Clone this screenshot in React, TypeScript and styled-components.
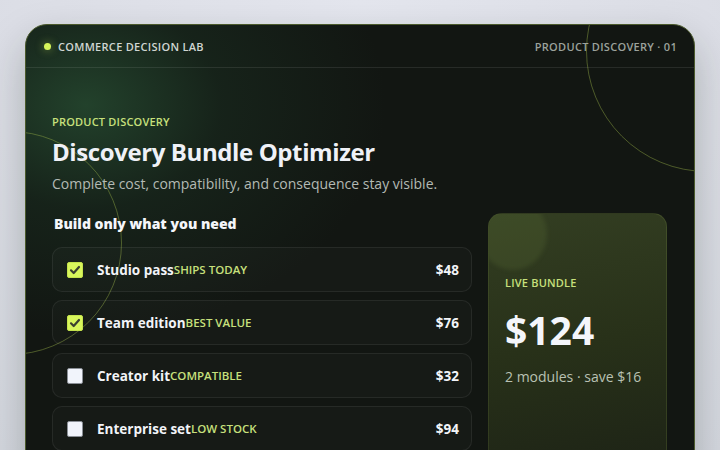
import React from 'react';
import styled, { createGlobalStyle } from 'styled-components';

interface IModule {
    id: number;
    name: string;
    tag: string;
    price: number;
    checked: boolean;
}

const modules: IModule[] = [
    { id: 1, name: 'Studio pass', tag: 'Ships today', price: 48, checked: true },
    { id: 2, name: 'Team edition', tag: 'Best value', price: 76, checked: true },
    { id: 3, name: 'Creator kit', tag: 'Compatible', price: 32, checked: false },
    { id: 4, name: 'Enterprise set', tag: 'Low stock', price: 94, checked: false },
];

const GlobalStyle = createGlobalStyle`
  html, body {
    margin: 0;
    padding: 0;
    height: 100%;
    overflow: hidden;
  }
  body {
    background: radial-gradient(circle at 50% 0%, #e4e6ee 0%, #dcdee6 60%, #d4d7df 100%);
    font-family: "Open Sans", "Noto Sans", sans-serif;
  }
`;

const Page = styled.div`
  padding: 24px 25px 0 25px;
  height: 450px;
  box-sizing: border-box;
`;

const Card = styled.div`
  position: relative;
  overflow: hidden;
  height: 460px;
  border-radius: 22px;
  border: 1px solid #4b5a2c;
  background:
    radial-gradient(ellipse 300px 230px at 60px 80px, rgba(40, 80, 52, 0.75) 0%, rgba(30, 58, 40, 0.35) 45%, rgba(18, 22, 18, 0) 100%),
    #121612;
  box-shadow: 0 18px 40px rgba(20, 30, 20, 0.25);
  box-sizing: border-box;
`;

const Ring = styled.div<{ $x: number; $y: number; $r: number }>`
  position: absolute;
  left: ${p => p.$x - p.$r}px;
  top: ${p => p.$y - p.$r}px;
  width: ${p => p.$r * 2}px;
  height: ${p => p.$r * 2}px;
  border-radius: 50%;
  border: 1px solid rgba(150, 175, 70, 0.45);
  pointer-events: none;
`;

const Header = styled.header`
  position: relative;
  display: flex;
  align-items: center;
  justify-content: space-between;
  height: 42px;
  padding: 0 17px 0 18px;
  border-bottom: 1px solid rgba(255, 255, 255, 0.09);
  font-size: 11px;
  font-weight: 600;
  letter-spacing: 0.3px;
  text-transform: uppercase;
`;

const Brand = styled.div`
  display: flex;
  align-items: center;
  gap: 7px;
  color: #d0d6d2;
`;

const Dot = styled.span`
  width: 7px;
  height: 7px;
  border-radius: 50%;
  background: #d6f55a;
  box-shadow: 0 0 8px rgba(214, 245, 90, 0.5);
`;

const Crumb = styled.div`
  color: #9ca29c;
`;

const Body = styled.main`
  position: relative;
  padding: 46px 27px 0 26px;
`;

const Eyebrow = styled.div`
  font-size: 11px;
  font-weight: 600;
  color: #c7e07c;
  text-transform: uppercase;
  letter-spacing: 0.2px;
  line-height: 16px;
`;

const Title = styled.h1`
  margin: 5px 0 0 0;
  font-size: 24px;
  font-weight: 700;
  letter-spacing: -0.4px;
  line-height: 33px;
  color: #eff1f7;
`;

const Subtitle = styled.p`
  margin: 6px 0 0 0;
  font-size: 14px;
  line-height: 19px;
  color: #b3bab4;
`;

const Columns = styled.div`
  display: grid;
  grid-template-columns: 420px 179px;
  gap: 16px;
  margin-top: 20px;
  align-items: start;
`;

const ListHeading = styled.h2`
  margin: 0 0 13px 2px;
  font-size: 14px;
  font-weight: 800;
  line-height: 21px;
  color: #f4f6fa;
`;

const List = styled.div`
  display: flex;
  flex-direction: column;
  gap: 8px;
`;

const Row = styled.label`
  display: flex;
  align-items: center;
  height: 45px;
  padding: 0 12px 0 14px;
  border-radius: 10px;
  border: 1px solid rgba(255, 255, 255, 0.07);
  background: rgba(255, 255, 255, 0.018);
  box-sizing: border-box;
`;

const Check = styled.span<{ $on: boolean }>`
  display: flex;
  align-items: center;
  justify-content: center;
  width: 16px;
  height: 16px;
  margin-right: 14px;
  border-radius: 2px;
  box-sizing: border-box;
  background: ${p => (p.$on ? '#d8f65c' : '#f1f4fb')};
  border: 1px solid ${p => (p.$on ? '#c4e24c' : '#8a8f96')};
`;

const Name = styled.span`
  font-size: 13.5px;
  font-weight: 700;
  color: #f2f4f8;
`;

const Tag = styled.span`
  font-size: 11.5px;
  font-weight: 600;
  color: #c7e07c;
  text-transform: uppercase;
`;

const Price = styled.span`
  margin-left: auto;
  font-size: 13.5px;
  font-weight: 700;
  color: #f2f4f8;
`;

const Summary = styled.aside`
  position: relative;
  overflow: hidden;
  height: 260px;
  padding: 61px 16px 0 16px;
  border-radius: 14px;
  border: 1px solid rgba(160, 190, 90, 0.14);
  background: linear-gradient(170deg, #333e22 0%, #283119 50%, #1d2316 100%);
  box-sizing: border-box;
`;

const Blob = styled.div`
  position: absolute;
  left: -10px;
  top: -16px;
  width: 68px;
  height: 72px;
  border-radius: 50%;
  background: rgba(120, 140, 70, 0.16);
  filter: blur(2px);
`;

const SummaryLabel = styled(Eyebrow)`
  position: relative;
`;

const Total = styled.div`
  position: relative;
  margin-top: 15px;
  font-size: 39px;
  font-weight: 700;
  line-height: 48px;
  color: #f4f6fb;
`;

const Note = styled.div`
  position: relative;
  margin-top: 13px;
  font-size: 14px;
  line-height: 19px;
  font-weight: 500;
  color: #b9c1b3;
`;

const CheckIcon = () => (
    <svg width="12" height="12" viewBox="0 0 12 12" fill="none">
        <path d="M2 6.3 L4.7 9 L10 3" stroke="#3a4030" strokeWidth="2.2" strokeLinecap="round" strokeLinejoin="round" />
    </svg>
);

export default function App() {
    const picked = modules.filter(m => m.checked);
    const total = picked.reduce((sum, m) => sum + m.price, 0);
    return (
        <>
            <GlobalStyle />
            <Page>
                <Card>
                    <Ring $x={-17} $y={217} $r={111} />
                    <Ring $x={680} $y={25} $r={120} />
                    <Header>
                        <Brand>
                            <Dot />
                            Commerce Decision Lab
                        </Brand>
                        <Crumb>Product Discovery · 01</Crumb>
                    </Header>
                    <Body>
                        <Eyebrow>Product Discovery</Eyebrow>
                        <Title>Discovery Bundle Optimizer</Title>
                        <Subtitle>Complete cost, compatibility, and consequence stay visible.</Subtitle>
                        <Columns>
                            <div>
                                <ListHeading>Build only what you need</ListHeading>
                                <List>
                                    {modules.map(m => (
                                        <Row key={m.id}>
                                            <Check $on={m.checked}>{m.checked && <CheckIcon />}</Check>
                                            <Name>{m.name}</Name>
                                            <Tag>{m.tag}</Tag>
                                            <Price>${m.price}</Price>
                                        </Row>
                                    ))}
                                </List>
                            </div>
                            <Summary>
                                <Blob />
                                <SummaryLabel>Live bundle</SummaryLabel>
                                <Total>${total}</Total>
                                <Note>{picked.length} modules · save $16</Note>
                            </Summary>
                        </Columns>
                    </Body>
                </Card>
            </Page>
        </>
    );
}
